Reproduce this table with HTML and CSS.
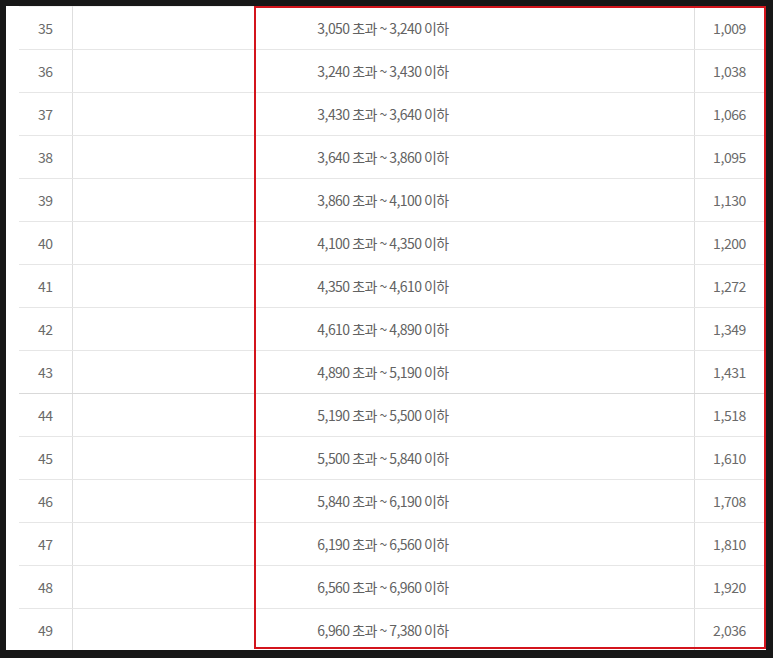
FILE: index.html
```html
<!DOCTYPE html>
<html>
<head>
	<meta charset="UTF-8">
	<title>요금표</title>
	<link rel="stylesheet" href="styles.css">
</head>
<body>
	<div class="frame">
		<table class="rate">
			<colgroup>
				<col class="c-no">
				<col class="c-range">
				<col class="c-val">
			</colgroup>
			<tr><td class="no">35</td><td class="range">3,050 초과 ~ 3,240 이하</td><td class="val">1,009</td></tr>
			<tr><td class="no">36</td><td class="range">3,240 초과 ~ 3,430 이하</td><td class="val">1,038</td></tr>
			<tr><td class="no">37</td><td class="range">3,430 초과 ~ 3,640 이하</td><td class="val">1,066</td></tr>
			<tr><td class="no">38</td><td class="range">3,640 초과 ~ 3,860 이하</td><td class="val">1,095</td></tr>
			<tr><td class="no">39</td><td class="range">3,860 초과 ~ 4,100 이하</td><td class="val">1,130</td></tr>
			<tr><td class="no">40</td><td class="range">4,100 초과 ~ 4,350 이하</td><td class="val">1,200</td></tr>
			<tr><td class="no">41</td><td class="range">4,350 초과 ~ 4,610 이하</td><td class="val">1,272</td></tr>
			<tr><td class="no">42</td><td class="range">4,610 초과 ~ 4,890 이하</td><td class="val">1,349</td></tr>
			<tr class="split"><td class="no">43</td><td class="range">4,890 초과 ~ 5,190 이하</td><td class="val">1,431</td></tr>
			<tr><td class="no">44</td><td class="range">5,190 초과 ~ 5,500 이하</td><td class="val">1,518</td></tr>
			<tr><td class="no">45</td><td class="range">5,500 초과 ~ 5,840 이하</td><td class="val">1,610</td></tr>
			<tr><td class="no">46</td><td class="range">5,840 초과 ~ 6,190 이하</td><td class="val">1,708</td></tr>
			<tr><td class="no">47</td><td class="range">6,190 초과 ~ 6,560 이하</td><td class="val">1,810</td></tr>
			<tr><td class="no">48</td><td class="range">6,560 초과 ~ 6,960 이하</td><td class="val">1,920</td></tr>
			<tr><td class="no">49</td><td class="range">6,960 초과 ~ 7,380 이하</td><td class="val">2,036</td></tr>
		</table>
		<div class="mark"></div>
	</div>
</body>
</html>
```

FILE: styles.css
```css
html, body{
	margin: 0;
	height: 100%;
}
body{
	background-color: #171717;
	font-family: "Noto Sans CJK KR", "Noto Sans", sans-serif;
}
.frame{
	position: relative;
	margin: 6px 0 0 6px;
	width: 760px;
	height: 644px;
	padding-left: 13px;
	box-sizing: border-box;
	background-color: #fff;
	overflow: hidden;
}
.rate{
	width: 747px;
	border-collapse: collapse;
	table-layout: fixed;
	border-top: 1px solid #f0f0f0;
}
.c-no{
	width: 53px;
}
.c-val{
	width: 72px;
}
.rate td{
	height: 42px;
	padding: 0;
	border-bottom: 1px solid #e6e6e6;
	font-size: 14px;
	color: #626262;
	letter-spacing: -0.4px;
	white-space: nowrap;
}
.rate tr.split td{
	border-bottom-color: #d9d9d9;
}
.rate td.no{
	text-align: center;
	border-right: 1px solid #dedede;
	color: #6a6a6a;
}
.rate td.range{
	text-align: center;
	border-right: 1px solid #dedede;
	letter-spacing: -0.55px;
}
.rate td.val{
	text-align: right;
	padding-right: 20px;
	color: #6a6a6a;
}
.mark{
	position: absolute;
	left: 248px;
	top: 0;
	width: 512px;
	height: 643px;
	border: 2px solid #d3141c;
	box-sizing: border-box;
}
```
